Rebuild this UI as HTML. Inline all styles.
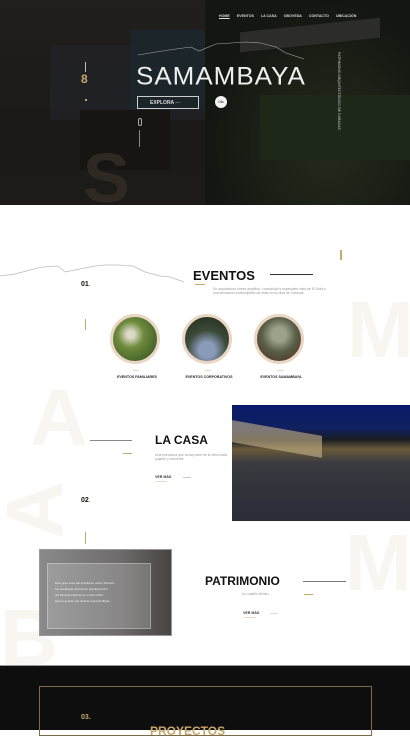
<!DOCTYPE html>
<html><head><meta charset="utf-8"><style>
*{margin:0;padding:0;box-sizing:border-box}
body{width:410px;height:730px;overflow:hidden;background:#fff;font-family:"Liberation Sans",sans-serif;position:relative}
.a{position:absolute}
.big{position:absolute;font-weight:bold;color:#f8f6f1;font-size:80px;line-height:1}
.nav span{margin-left:7px;font-size:3.6px;color:#ddd;font-weight:bold}
.circ{position:absolute;width:50px;height:50px;border-radius:50%;border:3px solid #ead6c2}
.lab{position:absolute;font-size:3.6px;font-weight:bold;color:#222;width:70px;text-align:center}
.h{position:absolute;font-weight:bold;color:#111}
.p{position:absolute;font-size:3.4px;color:#999;line-height:4px}
</style></head><body>
<!-- hero -->
<div class="a" style="left:0;top:0;width:410px;height:205px;background:#1a1b15"></div>
<div class="a" style="left:0;top:0;width:205px;height:205px;background:linear-gradient(180deg,#211f1b,#1b1a17 60%,#1d1b17)"></div>
<div class="a" style="left:50px;top:45px;width:155px;height:75px;background:#22242a;opacity:.7"></div>
<div class="a" style="left:130px;top:30px;width:75px;height:80px;background:#1c2529"></div>
<div class="a" style="left:80px;top:110px;width:90px;height:60px;background:#181411"></div>
<div class="a" style="left:205px;top:0;width:205px;height:205px;background:radial-gradient(ellipse at 60% 70%,#242b1c,#141611 70%)"></div>
<div class="a" style="left:240px;top:25px;width:140px;height:20px;background:#2c2c28;transform:skewY(-6deg)"></div>
<div class="a" style="left:260px;top:95px;width:150px;height:65px;background:#1e2818"></div>
<div class="big" style="left:83px;top:143px;font-size:70px;color:#2e2a23">S</div>
<div class="a nav" style="left:212px;top:4px">
<span style="text-decoration:underline">HOME</span><span>EVENTOS</span><span>LA CASA</span><span>OBOVEDA</span><span>CONTACTO</span><span>UBICACIÓN</span></div>
<svg class="a" style="left:136px;top:35px" width="170" height="30"><polyline points="2,20 20,17 40,14 55,12 63,16 80,9 95,8 110,7 125,8 140,12 150,18 168,24" fill="none" stroke="#aaa" stroke-width=".6"/></svg>
<div class="a" style="left:136px;top:61px;font-size:26px;color:#eee;letter-spacing:1px;font-weight:300;transform:scaleY(.95)">SAMAMBAYA</div>
<div class="a" style="left:137px;top:96px;width:62px;height:13px;border:1px solid #ccc;font-size:5px;font-weight:bold;color:#ddd;padding:3px 0 0 12px">EXPLORA <span style="color:#888">—</span></div>
<div class="a" style="left:215px;top:96px;width:12px;height:12px;border-radius:50%;background:#f4f4f4;font-size:3.5px;text-align:center;line-height:12px">Clic</div>
<div class="a" style="left:85px;top:62px;width:1px;height:10px;background:#bbb"></div>
<div class="a" style="left:81px;top:74px;font-size:12px;color:#c7a86a;font-weight:bold;line-height:11px">8</div>
<div class="a" style="left:85px;top:99px;width:2px;height:2px;background:#c7a86a"></div>
<div class="a" style="left:138px;top:118px;width:4px;height:8px;border:1px solid #aaa;border-radius:2px"></div>
<div class="a" style="left:139px;top:130px;width:1px;height:17px;background:#888"></div>
<div class="a" style="left:337px;top:52px;font-size:3.5px;color:#ccc;writing-mode:vertical-rl">PATRIMONIO ARQUITECTÓNICO DE CARACAS</div>
<!-- eventos -->
<div class="big" style="left:347px;top:290px">M</div>
<div class="big" style="left:30px;top:378px">A</div>
<div class="big" style="left:6px;top:470px;transform:rotate(-90deg)">A</div>
<div class="big" style="left:0;top:598px">B</div>
<div class="big" style="left:345px;top:523px">M</div>
<svg class="a" style="left:0;top:262px" width="185" height="24"><polyline points="0,14 15,12 30,8 43,5 58,4 65,10 80,7 95,4 105,3 118,3 133,4 145,10 160,14 170,15 184,20" fill="none" stroke="#bbb" stroke-width=".7"/></svg>
<div class="a" style="left:340px;top:250px;width:1.5px;height:10px;background:#c7a86a"></div>
<div class="h" style="left:193px;top:268px;font-size:13px">EVENTOS</div>
<div class="a" style="left:270px;top:274px;width:43px;height:1px;background:#333"></div>
<div class="a" style="left:195px;top:284px;width:10px;height:1px;background:#c7a86a"></div>
<div class="p" style="left:213px;top:287px;width:118px">Su arquitectura ofrece amplitud, comodidad y especiales vista de El Ávila y una sensación indescriptible de estar en la cima de Caracas.</div>
<div class="h" style="left:81px;top:281px;font-size:7px">01<span style="color:#c7a86a">.</span></div>
<div class="a" style="left:85px;top:319px;width:1px;height:11px;background:#c7a86a"></div>
<div class="circ" style="left:110px;top:314px;background:radial-gradient(circle at 40% 40%,#dcd8c8 10%,#6e8b3d 35%,#2f4a1e)"></div>
<div class="circ" style="left:182px;top:314px;background:radial-gradient(circle at 50% 75%,#8a9ab8 20%,#3c4a3a 50%,#1f2a1a)"></div>
<div class="circ" style="left:254px;top:314px;background:radial-gradient(circle at 50% 40%,#9aa48a 20%,#5a5e48 50%,#4a2e1e)"></div>
<div class="a" style="left:133px;top:370px;width:6px;height:1px;background:#ead6c2"></div>
<div class="a" style="left:205px;top:370px;width:6px;height:1px;background:#ead6c2"></div>
<div class="a" style="left:277px;top:370px;width:6px;height:1px;background:#ead6c2"></div>
<div class="lab" style="left:102px;top:375px">EVENTOS FAMILIARES</div>
<div class="lab" style="left:174px;top:375px">EVENTOS CORPORATIVOS</div>
<div class="lab" style="left:246px;top:375px">EVENTOS SAMAMBAYA</div>
<!-- la casa -->
<div class="a" style="left:232px;top:405px;width:178px;height:116px;background:linear-gradient(180deg,#0a1a6a 0%,#102060 20%,#1a1e22 30%,#6a5a3a 38%,#3a3a40 50%,#2a2c36 100%)"></div>
<div class="a" style="left:232px;top:428px;width:90px;height:22px;background:#c8b48a;opacity:.6;transform:skewY(10deg)"></div>
<div class="a" style="left:90px;top:440px;width:42px;height:1px;background:#888"></div>
<div class="a" style="left:123px;top:453px;width:9px;height:1px;background:#c7a86a"></div>
<div class="h" style="left:155px;top:433px;font-size:12px">LA CASA</div>
<div class="p" style="left:155px;top:453px;width:75px">Una estructura que forma parte de la Venezuela pujante y creciente.</div>
<div class="a" style="left:155px;top:475px;font-size:3.6px;font-weight:bold;color:#333">VER MÁS</div>
<div class="a" style="left:156px;top:481px;width:11px;height:1px;background:#ead6c2"></div>
<div class="a" style="left:183px;top:477px;width:8px;height:1px;background:#ccc"></div>
<div class="h" style="left:81px;top:497px;font-size:7px">02<span style="color:#c7a86a">.</span></div>
<div class="a" style="left:85px;top:532px;width:1px;height:12px;background:#c7a86a"></div>
<!-- patrimonio -->
<div class="a" style="left:39px;top:549px;width:133px;height:87px;background:linear-gradient(90deg,#8a8a8a,#6e6c6c 60%,#4a4444);border:1px solid #999"></div>
<div class="a" style="left:47px;top:563px;width:104px;height:66px;background:rgba(220,220,220,.25);border:1px solid rgba(255,255,255,.3)"></div>
<div class="a" style="left:55px;top:580px;font-size:3px;color:#eee;line-height:6px">Este gran casa del Arquitecto Jesús Tenreiro<br>fue declarada patrimonio arquitectónico<br>del Municipio Baruta en el año 2012<br>bajo la gestión del alcalde Gerardo Blyde.</div>
<div class="h" style="left:205px;top:574px;font-size:12px">PATRIMONIO</div>
<div class="a" style="left:303px;top:581px;width:43px;height:1px;background:#777"></div>
<div class="a" style="left:304px;top:594px;width:9px;height:1px;background:#c7a86a"></div>
<div class="p" style="left:242px;top:592px">Un castillo infinito...</div>
<div class="a" style="left:243px;top:611px;font-size:3.6px;font-weight:bold;color:#333">VER MÁS</div>
<div class="a" style="left:244px;top:617px;width:12px;height:1px;background:#ead6c2"></div>
<div class="a" style="left:270px;top:613px;width:8px;height:1px;background:#ddd"></div>
<!-- dark section -->
<div class="a" style="left:0;top:665px;width:410px;height:65px;background:#0e0e0e;border-top:1px solid #999"></div>
<div class="a" style="left:39px;top:686px;width:333px;height:50px;border:1px solid #7a6a48"></div>
<div class="a" style="left:81px;top:714px;font-size:7px;font-weight:bold;color:#c7a86a">03.</div>
<div class="a" style="left:150px;top:724px;font-size:12px;font-weight:bold;color:#c7a86a">PROYECTOS</div>
</body></html>
